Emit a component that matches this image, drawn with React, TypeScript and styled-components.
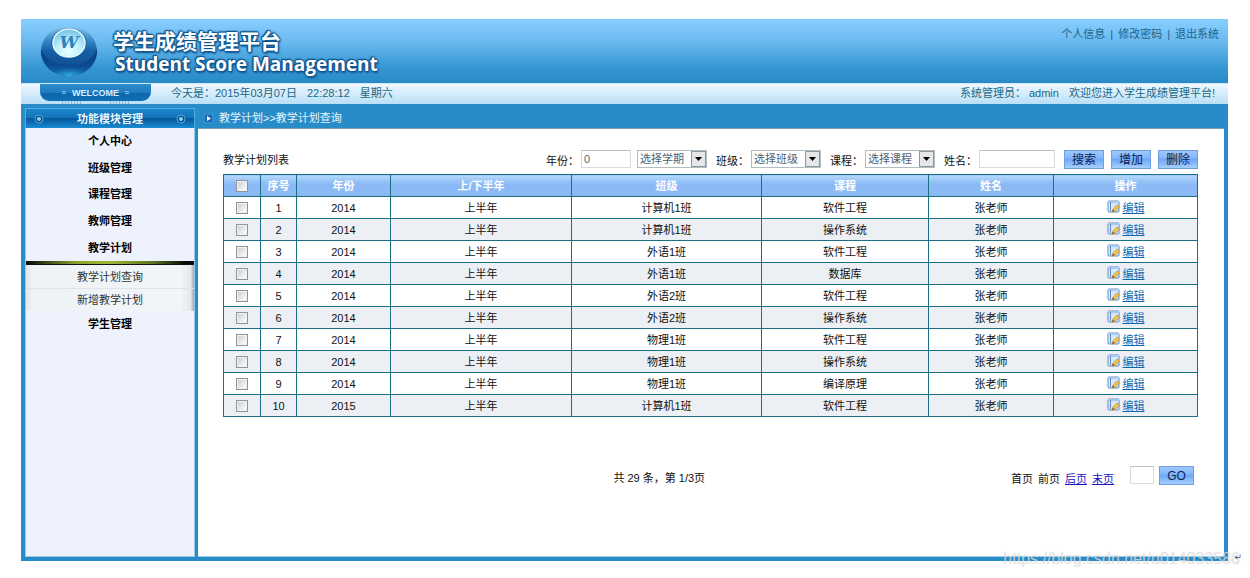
import React from "react";
import styled, { createGlobalStyle, css } from "styled-components";

const GlobalStyle = createGlobalStyle`
  *, *::before, *::after { box-sizing: border-box; }
  body {
    margin: 0;
    background: #fff;
    color: #111;
    font: 11px/16px "Liberation Sans", "Noto Sans CJK SC", sans-serif;
  }
  input, select, button { font: inherit; margin: 0; }
`;

const Page = styled.div`
  position: relative;
  display: flex;
  min-height: 100vh;
  padding: 19px 22px 17px 21px;
`;

const Frame = styled.div`
  flex: 1;
  min-width: 0;
  display: flex;
  flex-direction: column;
  background: #288cc8;
`;

const Header = styled.header`
  display: flex;
  justify-content: space-between;
  height: 64px;
  padding: 0 9px 0 19px;
  background: linear-gradient(#88ceff, #6bbaf0 35%, #3797d2 75%, #288ac6);
`;

const Brand = styled.div`
  display: flex;
  gap: 14px;
  padding-top: 6px;
`;

const Titles = styled.h1`
  margin: 4px 0 0;
  color: #fff;
  font-family: "Open Sans", "Noto Sans CJK SC", sans-serif;
  font-weight: 700;
  text-shadow: 1px 0 1px #11568f, -1px 0 1px #11568f, 0 1px 1px #11568f,
    0 -1px 1px #11568f, 1px 2px 2px #11568f, -1px -1px 1px #11568f,
    0 0 3px #11568f;
`;

const TitleCn = styled.span`
  display: block;
  font-size: 21px;
  line-height: 24px;
`;

const TitleEn = styled.span`
  display: block;
  font-size: 19px;
  line-height: 22px;
  padding-left: 2px;
`;

const UserNav = styled.nav`
  display: flex;
  align-items: center;
  gap: 5px;
  height: 30px;
  color: #1b6489;
`;

const NavLink = styled.a`
  color: inherit;
  text-decoration: none;
`;

const WelcomeBar = styled.div`
  display: flex;
  height: 21px;
  padding: 0 13px 0 19px;
  color: #1a6785;
  line-height: 19px;
  border-top: 1px solid #d3e9f6;
  background: linear-gradient(#eef8ff, #b9dff6);
`;

const WelcomeTab = styled.div`
  width: 111px;
  margin-right: 20px;
`;

const WelcomeLabel = styled.div`
  display: flex;
  align-items: center;
  justify-content: center;
  gap: 6px;
  height: 17px;
  border-radius: 0 0 9px 9px;
  background: linear-gradient(#2c8ccb, #1f7cc0 50%, #0e66ab 55%, #1070b8);
  color: #d6edff;
  font-size: 9px;
  font-weight: 700;
  line-height: 16px;
  &::before, &::after {
    content: "";
    width: 4px;
    height: 3px;
    border: solid #7fb9e0;
    border-width: 1px 0;
  }
`;

const TabTeeth = styled.div`
  display: flex;
  justify-content: center;
  gap: 28px;
  &::before, &::after {
    content: "";
    width: 20px;
    height: 3px;
    background: repeating-linear-gradient(90deg, #93b9d2 0 1px, transparent 1px 3px);
  }
`;

const Greeting = styled.div`
  margin-left: auto;
`;

const Gap = styled.span`
  display: inline-block;
  width: 10px;
`;

const Body = styled.div`
  flex: 1;
  display: flex;
  gap: 3px;
  padding: 4px;
`;

const Sidebar = styled.aside`
  display: flex;
  flex-direction: column;
  width: 170px;
`;

const SideHead = styled.div`
  display: flex;
  align-items: center;
  justify-content: space-between;
  height: 20px;
  padding: 0 8px;
  border: 1px solid #4bb0e6;
  border-bottom: 0;
  color: #e8f6ff;
  font-weight: 700;
  background: linear-gradient(#1a86cc, #1673b8 45%, #06589b 50%, #0b66ac 65%, #1a8cd2);
`;

const SideBody = styled.div`
  flex: 1;
  background: #edf2fc;
  border: 1px solid #9ccbe2;
  border-top: 0;
`;

const Menu = styled.div`
  display: flex;
  flex-direction: column;
  height: 133px;
`;

const menuItem = css`
  display: flex;
  align-items: center;
  justify-content: center;
  text-decoration: none;
`;

const MenuItem = styled.a`
  ${menuItem}
  flex: 1;
  color: #000;
  font-weight: 700;
`;

const LastItem = styled(MenuItem)`
  height: 25px;
`;

const Accent = styled.div`
  height: 4px;
  border-bottom: 1px solid #111;
  background: linear-gradient(90deg, #050805, #8aa32c 30%, #9db637 50%, #5d7622 75%, #050805 95%);
`;

const SubMenu = styled.div`
  background: linear-gradient(90deg, #e2e6e9, #eff3f5 4%, #f1f5f7 92%, #e4e8ec 98%, #9ca5ad);
`;

const SubItem = styled.a`
  ${menuItem}
  height: 23px;
  color: #333;
  & + & { border-top: 1px solid #dfe4e7; }
`;

const Main = styled.main`
  flex: 1;
  min-width: 0;
  display: flex;
  flex-direction: column;
`;

const Crumb = styled.div`
  display: flex;
  align-items: center;
  gap: 6px;
  height: 20px;
  padding-left: 6px;
  color: #e8f5ff;
`;

const Panel = styled.section`
  flex: 1;
  padding: 21px 26px 20px 25px;
  border-bottom: 1px solid #9ccbe2;
  border-top: 1px solid #7f9fb5;
  background: #fff;
`;

const Filters = styled.form`
  display: flex;
  align-items: flex-start;
  gap: 9px;
  height: 24px;
`;

const ListTitle = styled.h2`
  flex: 1;
  margin: 2px 0 0;
  font-size: 11px;
  font-weight: 400;
`;

const Field = styled.div`
  display: flex;
  gap: 2px;
`;

const Label = styled.label`
  padding-top: 3px;
`;

const TextInput = styled.input<{ $w: number }>`
  width: ${(p) => p.$w}px;
  height: 18px;
  padding: 0 2px;
  border: 1px solid #d5dde2;
  border-top-color: #b9c2c8;
  color: #4d6375;
  background: #fff;
`;

const SelectBox = styled.div<{ $after?: boolean }>`
  position: relative;
  margin-left: ${(p) => (p.$after ? 4 : 0)}px;
`;

const Select = styled.select`
  display: block;
  width: 70px;
  height: 18px;
  padding: 0 2px;
  appearance: none;
  border: 1px solid #b2bcc3;
  border-radius: 0;
  color: #4d6375;
  background: #fff;
`;

const SelectArrow = styled.svg`
  position: absolute;
  top: 1px;
  right: 0;
  pointer-events: none;
`;

const Buttons = styled.div`
  display: flex;
  gap: 7px;
`;

const Button = styled.button<{ $w?: number }>`
  width: ${(p) => p.$w ?? 40}px;
  height: 19px;
  padding: 0;
  border: 1px solid #6f9fe0;
  color: #0c2350;
  font-size: 12px;
  line-height: 16px;
  background: linear-gradient(#9cc8fc, #86b8fa 40%, #6ea8f8 50%, #a5d0ff);
`;

const Table = styled.table`
  width: 100%;
  table-layout: fixed;
  border-collapse: collapse;
  text-align: center;
`;

const Th = styled.th`
  height: 22px;
  padding: 0;
  border: 1px solid #1b7184;
  color: #fff;
  background: linear-gradient(#b4d9fb, #93c2f7 30%, #8cb9f5 45%, #8cbaf6);
`;

const Td = styled.td`
  height: 22px;
  padding: 0;
  border: 1px solid #1b7184;
`;

const Row = styled.tr`
  &:nth-child(even) { background: #ecf0f5; }
`;

const Check = styled.input`
  display: block;
  appearance: none;
  width: 12px;
  height: 12px;
  margin: 0 auto;
  border: 1px solid #8e9499;
  background: linear-gradient(135deg, #c5cad0, #f8f8f8 80%);
  box-shadow: inset 0 0 0 1px #f1f1f1;
`;

const EditLink = styled.a`
  display: inline-flex;
  gap: 3px;
  vertical-align: top;
  color: #0b69b3;
`;

const EditIcon = styled.svg`
  display: block;
`;

const Pager = styled.div`
  display: grid;
  grid-template-columns: 40% 1fr auto;
  margin-top: 49px;
  padding-right: 4px;
`;

const Summary = styled.p`
  grid-column: 2;
  margin: 4px 0 0;
  padding-left: 2px;
`;

const PageNav = styled.div`
  display: flex;
  gap: 5px;
`;

const PageLinks = styled.div`
  display: flex;
  gap: 5px;
  padding: 5px 11px 0 0;
`;

const PageLink = styled.a`
  color: #1a13c4;
`;

const Watermark = styled.div`
  position: absolute;
  right: 10px;
  bottom: 9px;
  color: rgba(255, 255, 255, 0.6);
  font-size: 16px;
  line-height: 20px;
  text-shadow: 0 0 1px rgba(120, 120, 120, 0.45);
`;

const ReturnMark = styled.span`
  position: absolute;
  right: 8px;
  bottom: 13px;
  color: #555;
  font: 9px/16px "DejaVu Sans", sans-serif;
`;

const Logo = () => (
  <svg width="59" height="53" viewBox="0 0 59 53" aria-hidden="true">
    <defs>
      <linearGradient id="ball" x1="0" y1="0" x2="0" y2="1">
        <stop offset="0" stopColor="#8cc8ee" />
        <stop offset="0.25" stopColor="#3f8fc9" />
        <stop offset="0.5" stopColor="#1560a5" />
        <stop offset="1" stopColor="#0b4488" />
      </linearGradient>
      <linearGradient id="bowl" x1="0" y1="0" x2="0" y2="1">
        <stop offset="0" stopColor="#0a3f80" />
        <stop offset="0.6" stopColor="#0b4b8f" />
        <stop offset="1" stopColor="#1673b5" />
      </linearGradient>
      <radialGradient id="glow" cx="0.5" cy="1" r="0.6">
        <stop offset="0" stopColor="#35c0e4" stopOpacity="0.9" />
        <stop offset="1" stopColor="#1c8ace" stopOpacity="0" />
      </radialGradient>
      <radialGradient id="glass" cx="0.5" cy="0.8" r="0.8">
        <stop offset="0" stopColor="#e9ffff" />
        <stop offset="0.5" stopColor="#bdeefa" />
        <stop offset="1" stopColor="#6fbfe4" />
      </radialGradient>
    </defs>
    <ellipse cx="29" cy="26" rx="28" ry="25" fill="url(#ball)" />
    <path d="M1 24C7 37 18 40 29 40C40 40 51 37 57 24C58 40 45 51 29 51C13 51 0 40 1 24Z" fill="url(#bowl)" />
    <ellipse cx="29" cy="44" rx="16" ry="7" fill="url(#glow)" />
    <ellipse cx="29" cy="18" rx="18" ry="15" fill="#1a69aa" />
    <ellipse cx="29" cy="18" rx="16" ry="14" fill="url(#glass)" stroke="#e4f6fd" strokeWidth="1.500" />
    <text x="29" y="23" textAnchor="middle" fontFamily="DejaVu Serif, serif" fontSize="17" fontWeight="700" fontStyle="italic" fill="#2d83bd">W</text>
  </svg>
);

const Knob = () => (
  <svg width="10" height="10" viewBox="0 0 10 10" aria-hidden="true">
    <circle cx="5" cy="5" r="4" fill="#0a4d87" stroke="#4ea9dd" />
    <circle cx="5" cy="5" r="2" fill="#8fd0f2" />
  </svg>
);

const Pencil = () => (
  <EditIcon width="13" height="14" viewBox="0 0 13 14" aria-hidden="true">
    <rect x="1" y="1" width="11" height="11" rx="1" fill="#d9e9fa" stroke="#5f8bc8" />
    <path d="M1 1h11v2H1z" fill="#a9c9ef" />
    <path d="M3.500 2v9" stroke="#5f8bc8" />
    <path d="M5 12l1-3 4-4 2.500 2-4 4z" fill="#f5c64e" stroke="#c08a2a" strokeWidth="0.7" />
    <path d="M5 12l1-2.500 1.500 1.500z" fill="#6b5a3a" />
  </EditIcon>
);

const Picker = ({ id, text, after, name }: { id: string; text: string; after?: boolean; name?: string }) => (
  <SelectBox $after={after}>
    <Select id={id} aria-label={name}>
      <option>{text}</option>
    </Select>
    <SelectArrow width="16" height="16" viewBox="0 0 16 16" aria-hidden="true">
      <rect x="0.5" y="0.5" width="14" height="15" fill="#e4e6e8" stroke="#8f979d" />
      <path d="M4 6h7L7.500 10z" fill="#000" />
    </SelectArrow>
  </SelectBox>
);

const columns = [37, 36, 94, 181, 190, 167, 125, 144];
const headings = ["序号", "年份", "上/下半年", "班级", "课程", "姓名", "操作"];
const rows = [
  ["2014", "计算机1班", "软件工程"],
  ["2014", "计算机1班", "操作系统"],
  ["2014", "外语1班", "软件工程"],
  ["2014", "外语1班", "数据库"],
  ["2014", "外语2班", "软件工程"],
  ["2014", "外语2班", "操作系统"],
  ["2014", "物理1班", "软件工程"],
  ["2014", "物理1班", "操作系统"],
  ["2014", "物理1班", "编译原理"],
  ["2015", "计算机1班", "软件工程"],
];

export default function App() {
  return (
    <Page>
      <GlobalStyle />
      <Frame>
        <Header>
          <Brand>
            <Logo />
            <Titles>
              <TitleCn>学生成绩管理平台</TitleCn>
              <TitleEn>Student Score Management</TitleEn>
            </Titles>
          </Brand>
          <UserNav>
            <NavLink href="#info">个人信息</NavLink>|
            <NavLink href="#password">修改密码</NavLink>|
            <NavLink href="#logout">退出系统</NavLink>
          </UserNav>
        </Header>
        <WelcomeBar>
          <WelcomeTab>
            <WelcomeLabel>WELCOME</WelcomeLabel>
            <TabTeeth />
          </WelcomeTab>
          <div>
            今天是：2015年03月07日<Gap />22:28:12<Gap />星期六
          </div>
          <Greeting>
            系统管理员： admin<Gap />欢迎您进入学生成绩管理平台!
          </Greeting>
        </WelcomeBar>
        <Body>
          <Sidebar>
            <SideHead>
              <Knob />
              功能模块管理
              <Knob />
            </SideHead>
            <SideBody>
              <Menu>
                {["个人中心", "班级管理", "课程管理", "教师管理", "教学计划"].map((t) => (
                  <MenuItem key={t} href="#menu">{t}</MenuItem>
                ))}
              </Menu>
              <Accent />
              <SubMenu>
                <SubItem href="#query">教学计划查询</SubItem>
                <SubItem href="#new">新增教学计划</SubItem>
              </SubMenu>
              <LastItem href="#students">学生管理</LastItem>
            </SideBody>
          </Sidebar>
          <Main>
            <Crumb>
              <svg width="9" height="9" viewBox="0 0 9 9" aria-hidden="true">
                <rect width="9" height="9" fill="#1566b5" stroke="#5fb4ec" />
                <path d="M3 2l4 2.500L3 7z" fill="#fff" />
              </svg>
              教学计划&gt;&gt;教学计划查询
            </Crumb>
            <Panel>
              <Filters onSubmit={(e) => e.preventDefault()}>
                <ListTitle>教学计划列表</ListTitle>
                <Field>
                  <Label htmlFor="year">年份：</Label>
                  <TextInput id="year" $w={50} defaultValue="0" />
                  <Picker id="term" text="选择学期" name="学期" after />
                </Field>
                <Field>
                  <Label htmlFor="class">班级：</Label>
                  <Picker id="class" text="选择班级" />
                </Field>
                <Field>
                  <Label htmlFor="course">课程：</Label>
                  <Picker id="course" text="选择课程" />
                </Field>
                <Field>
                  <Label htmlFor="name">姓名：</Label>
                  <TextInput id="name" $w={76} />
                </Field>
                <Buttons>
                  <Button>搜索</Button>
                  <Button>增加</Button>
                  <Button>删除</Button>
                </Buttons>
              </Filters>
              <Table>
                <colgroup>
                  {columns.map((w, i) => <col key={i} width={w} />)}
                </colgroup>
                <thead>
                  <tr>
                    <Th><Check type="checkbox" aria-label="全选" /></Th>
                    {headings.map((h) => <Th key={h}>{h}</Th>)}
                  </tr>
                </thead>
                <tbody>
                  {rows.map(([year, cls, course], i) => (
                    <Row key={i}>
                      <Td><Check type="checkbox" aria-label={`选择 ${i + 1}`} /></Td>
                      <Td>{i + 1}</Td>
                      <Td>{year}</Td>
                      <Td>上半年</Td>
                      <Td>{cls}</Td>
                      <Td>{course}</Td>
                      <Td>张老师</Td>
                      <Td><EditLink href="#edit"><Pencil />编辑</EditLink></Td>
                    </Row>
                  ))}
                </tbody>
              </Table>
              <Pager>
                <Summary>共 29 条，第 1/3页</Summary>
                <PageNav>
                  <PageLinks>
                    <span>首页</span>
                    <span>前页</span>
                    <PageLink href="#next">后页</PageLink>
                    <PageLink href="#last">末页</PageLink>
                  </PageLinks>
                  <TextInput $w={24} aria-label="页码" />
                  <Button $w={35}>GO</Button>
                </PageNav>
              </Pager>
            </Panel>
          </Main>
        </Body>
      </Frame>
      <Watermark>https://blog.csdn.net/u014033586</Watermark>
      <ReturnMark>↵</ReturnMark>
    </Page>
  );
}
